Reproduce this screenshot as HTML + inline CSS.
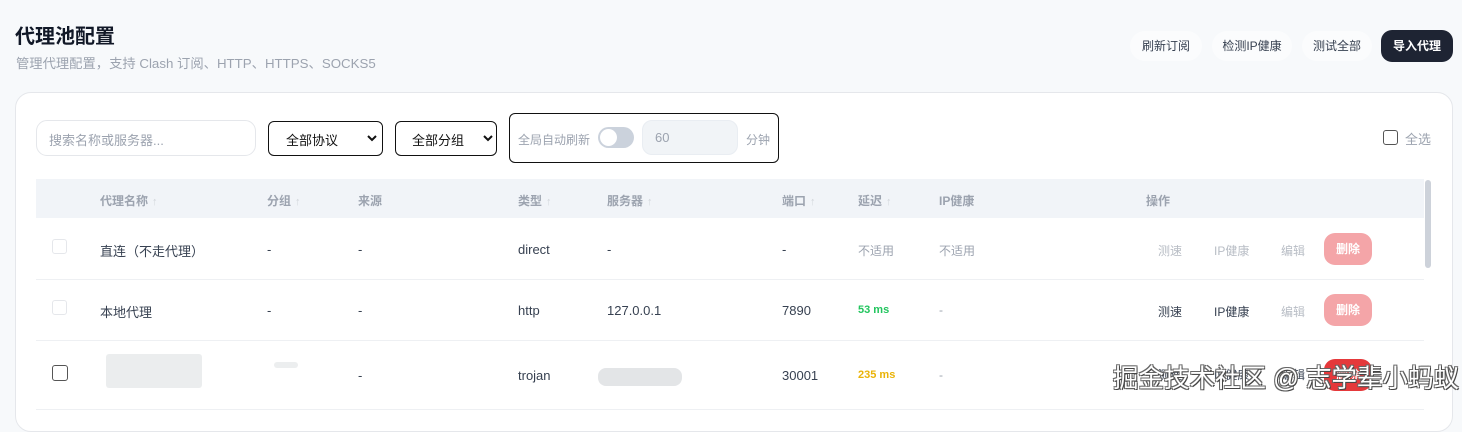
<!DOCTYPE html>
<html><head><meta charset="utf-8"><style>
*{margin:0;padding:0;box-sizing:border-box}
body{width:1462px;height:418px;overflow:hidden;background:#f7f9fb;font-family:"Liberation Sans","Noto Sans CJK SC",sans-serif;position:relative;color:#374151}
.a{position:absolute;white-space:nowrap}
.h{font-size:12px;font-weight:bold;color:#9ca3af;top:192px}
.ar{color:#d1d5db;font-weight:normal;margin-left:4px;font-size:11px}
.c{font-size:13px;color:#374151}
.g{font-size:12px;color:#9ca3af}
.del{position:absolute;width:48px;height:32px;border-radius:11px;background:#f4a5a8;color:#fff;font-size:12px;font-weight:bold;text-align:center;line-height:32px}
.cb{position:absolute;width:15px;height:15px;border:1px solid #e5e7eb;border-radius:3px;background:#fff}
.line{position:absolute;left:36px;width:1388px;height:1px;background:#eef0f3}
.pill{position:absolute;top:31px;height:30px;border-radius:15px;background:#fbfcfd;font-size:12px;color:#374151;text-align:center;line-height:30px}
.blur{position:absolute}
</style></head><body>
<div class="a" style="left:15px;top:20px;font-size:20px;font-weight:bold;color:#111827">代理池配置</div>
<div class="a" style="left:16px;top:53px;font-size:13.3px;color:#9ca3af">管理代理配置，支持 Clash 订阅、HTTP、HTTPS、SOCKS5</div>
<div class="pill" style="left:1130px;width:72px">刷新订阅</div>
<div class="pill" style="left:1212px;width:80px">检测IP健康</div>
<div class="pill" style="left:1302px;width:70px">测试全部</div>
<div class="pill" style="left:1381px;width:72px;top:30px;height:32px;border-radius:11px;background:#1e2433;color:#fff;font-weight:bold;line-height:32px">导入代理</div>

<div style="position:absolute;left:15px;top:92px;width:1438px;height:340px;background:#fff;border:1px solid #e5e7eb;border-radius:16px"></div>

<div style="position:absolute;left:36px;top:120px;width:220px;height:36px;border:1px solid #e5e7eb;border-radius:11px"></div>
<div class="a" style="left:49px;top:130px;font-size:13px;color:#9ca3af">搜索名称或服务器...</div>
<div style="position:absolute;left:268px;top:121px;width:115px;height:35px;border:1px solid #111;border-radius:6px"></div>
<div class="a" style="left:286px;top:130px;font-size:13px;color:#111">全部协议</div>
<svg class="a" style="left:367px;top:134px" width="10" height="8"><path d="M1 2l4 4 4-4" fill="none" stroke="#111" stroke-width="2"/></svg>
<div style="position:absolute;left:395px;top:121px;width:102px;height:35px;border:1px solid #111;border-radius:6px"></div>
<div class="a" style="left:412px;top:130px;font-size:13px;color:#111">全部分组</div>
<svg class="a" style="left:483px;top:134px" width="10" height="8"><path d="M1 2l4 4 4-4" fill="none" stroke="#111" stroke-width="2"/></svg>
<div style="position:absolute;left:509px;top:113px;width:270px;height:50px;border:1px solid #111;border-radius:6px"></div>
<div class="a" style="left:518px;top:131px;font-size:12px;color:#9ca3af">全局自动刷新</div>
<div style="position:absolute;left:598px;top:127px;width:36px;height:21px;border-radius:11px;background:#cbd2dc"></div>
<div style="position:absolute;left:600px;top:129px;width:17px;height:17px;border-radius:50%;background:#fff"></div>
<div style="position:absolute;left:642px;top:120px;width:96px;height:35px;border-radius:10px;background:#f1f4f7;border:1px solid #e9edf2"></div>
<div class="a" style="left:655px;top:130px;font-size:13px;color:#9ca3af">60</div>
<div class="a" style="left:746px;top:131px;font-size:12px;color:#9ca3af">分钟</div>
<div style="position:absolute;left:1383px;top:130px;width:15px;height:15px;border:1px solid #555;border-radius:3px"></div>
<div class="a" style="left:1405px;top:129px;font-size:13px;color:#9ca3af">全选</div>

<div style="position:absolute;left:36px;top:179px;width:1388px;height:39px;background:#f1f4f8"></div>
<div style="position:absolute;left:1425px;top:180px;width:6px;height:88px;border-radius:3px;background:#cdd2da"></div>
<div class="a h" style="left:100px">代理名称<span class="ar">↑</span></div>
<div class="a h" style="left:267px">分组<span class="ar">↑</span></div>
<div class="a h" style="left:358px">来源</div>
<div class="a h" style="left:518px">类型<span class="ar">↑</span></div>
<div class="a h" style="left:607px">服务器<span class="ar">↑</span></div>
<div class="a h" style="left:782px">端口<span class="ar">↑</span></div>
<div class="a h" style="left:858px">延迟<span class="ar">↑</span></div>
<div class="a h" style="left:939px">IP健康</div>
<div class="a h" style="left:1146px">操作</div>

<!-- row1 -->
<div class="cb" style="left:52px;top:239px"></div>
<div class="a c" style="left:100px;top:241px">直连（不走代理）</div>
<div class="a c" style="left:267px;top:242px">-</div>
<div class="a c" style="left:358px;top:242px">-</div>
<div class="a c" style="left:518px;top:242px">direct</div>
<div class="a c" style="left:607px;top:242px">-</div>
<div class="a c" style="left:782px;top:242px">-</div>
<div class="a g" style="left:858px;top:242px">不适用</div>
<div class="a g" style="left:939px;top:242px">不适用</div>
<div class="a g" style="left:1158px;top:242px;color:#b8bdc5">测速</div>
<div class="a g" style="left:1214px;top:242px;color:#b8bdc5">IP健康</div>
<div class="a g" style="left:1281px;top:242px;color:#b8bdc5">编辑</div>
<div class="del" style="left:1324px;top:233px">删除</div>
<div class="line" style="top:279px"></div>
<!-- row2 -->
<div class="cb" style="left:52px;top:300px"></div>
<div class="a c" style="left:100px;top:302px">本地代理</div>
<div class="a c" style="left:267px;top:303px">-</div>
<div class="a c" style="left:358px;top:303px">-</div>
<div class="a c" style="left:518px;top:303px">http</div>
<div class="a c" style="left:607px;top:303px">127.0.0.1</div>
<div class="a c" style="left:782px;top:303px">7890</div>
<div class="a" style="left:858px;top:304px;font-size:11px;font-weight:bold;color:#22c55e">53 ms</div>
<div class="a g" style="left:939px;top:303px">-</div>
<div class="a" style="left:1158px;top:303px;font-size:12px;color:#374151">测速</div>
<div class="a" style="left:1214px;top:303px;font-size:12px;color:#374151">IP健康</div>
<div class="a g" style="left:1281px;top:303px;color:#b8bdc5">编辑</div>
<div class="del" style="left:1324px;top:294px">删除</div>
<div class="line" style="top:340px"></div>
<!-- row3 -->
<div style="position:absolute;left:52px;top:365px;width:16px;height:16px;border:1px solid #555;border-radius:3px"></div>
<div class="blur" style="left:106px;top:354px;width:96px;height:34px;background:#e6e8ea;border-radius:3px;opacity:.8"></div>
<div class="blur" style="left:274px;top:362px;width:24px;height:6px;background:#eceeef;border-radius:3px"></div>
<div class="a c" style="left:358px;top:368px">-</div>
<div class="a c" style="left:518px;top:368px">trojan</div>
<div class="blur" style="left:598px;top:368px;width:84px;height:18px;background:#e3e5e7;border-radius:8px"></div>
<div class="a c" style="left:782px;top:368px">30001</div>
<div class="a" style="left:858px;top:369px;font-size:11px;font-weight:bold;color:#eab308">235 ms</div>
<div class="a g" style="left:939px;top:368px">-</div>
<div class="a" style="left:1158px;top:366px;font-size:12px;color:#374151">测速</div>
<div class="a" style="left:1214px;top:366px;font-size:12px;color:#374151">IP健康</div>
<div class="a" style="left:1281px;top:366px;font-size:12px;color:#374151">编辑</div>
<div class="del" style="left:1324px;top:359px;background:#e5393b">删除</div>
<div class="line" style="top:409px"></div>

<div class="a" style="left:1113px;top:358px;font-size:25.5px;color:#fff;text-shadow:1px 1px 0 #444,-1px -1px 0 #666,1px -1px 0 #666,-1px 1px 0 #666">掘金技术社区 @ 志学辈小蚂蚁</div>
</body></html>
